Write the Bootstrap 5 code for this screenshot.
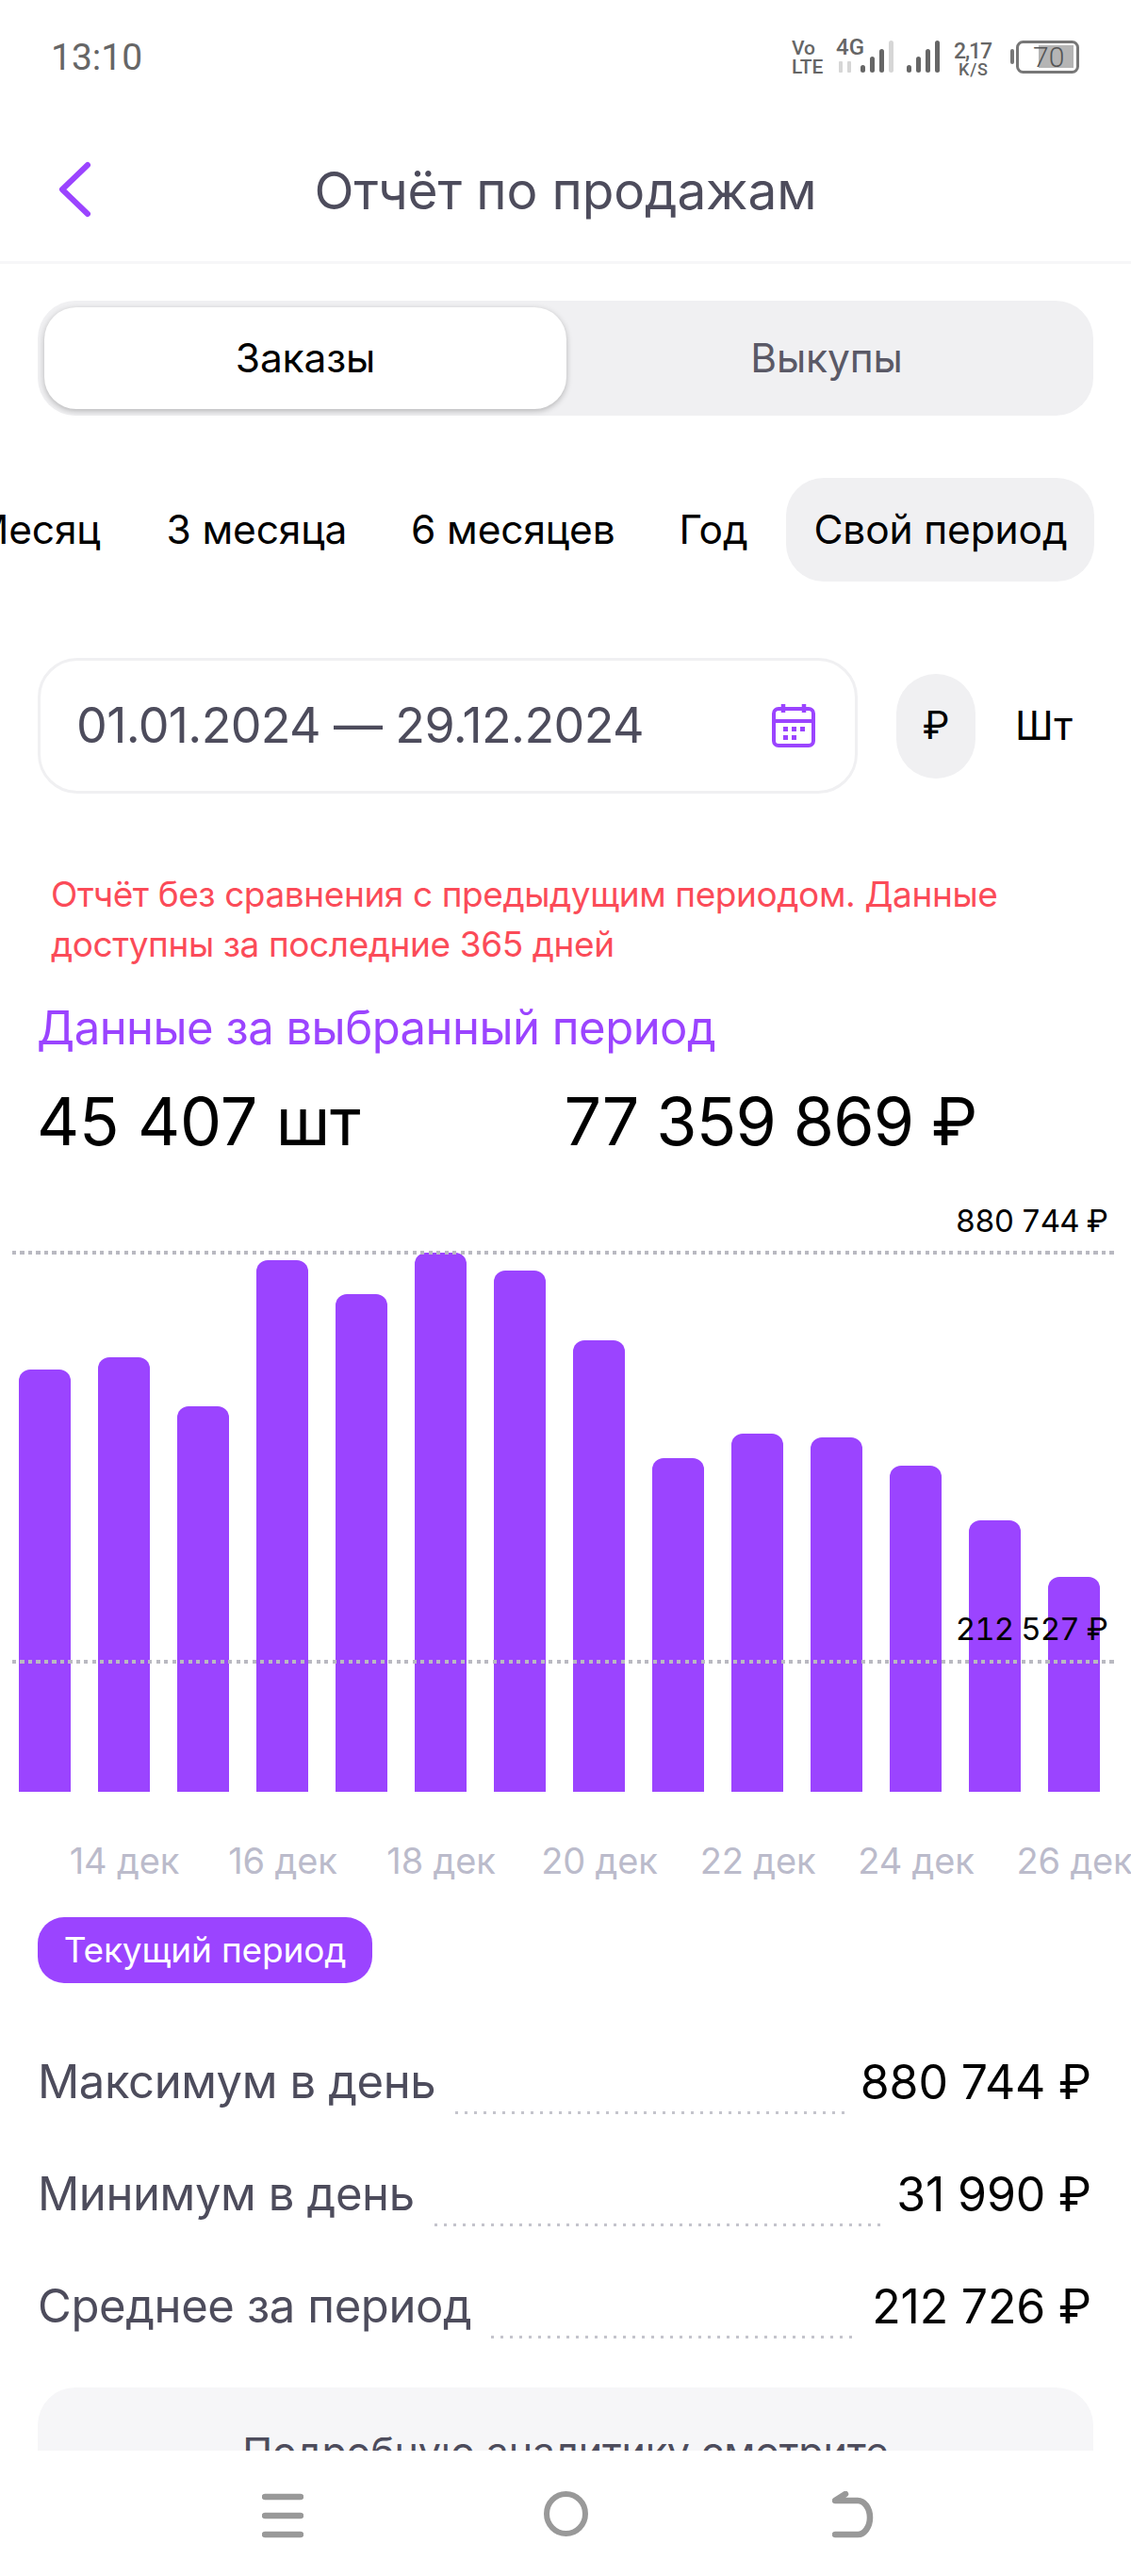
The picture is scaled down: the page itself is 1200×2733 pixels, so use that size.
<!DOCTYPE html>
<html lang="ru">
<head>
<meta charset="utf-8">
<title>Отчёт по продажам</title>
<link href="https://cdn.jsdelivr.net/npm/bootstrap@5.3.0/dist/css/bootstrap.min.css" rel="stylesheet">
<style>
html,body{margin:0;background:#fff}
body{width:1200px;height:2733px;overflow:hidden;font-family:Inter,"Liberation Sans",sans-serif;color:#000;letter-spacing:-.01em}
.app-shell{width:1200px;height:2733px;overflow:hidden}
.status-row{height:120px;padding:0 48px 0 54px;font-family:Roboto,"Liberation Sans",sans-serif;color:#666;letter-spacing:0}
.status-time{font-size:39px;line-height:1;padding-top:3px}
.status-row text{font-family:Roboto,"Liberation Sans",sans-serif}
.title-row{height:160px;border-bottom:3px solid #f6f6f8;position:relative}
.title-text{font-size:55px;line-height:1;color:#4d4c5c;margin:0;font-weight:400;padding-top:7px}
.back-btn{position:absolute;left:60px;top:50px;line-height:0}
.scroll-area{height:2320px;overflow:hidden}
.seg-wrap{margin:39px 40px 0;height:122px;background:#f0f0f2;border-radius:40px;padding:7px}
.seg-on,.seg-off{font-size:42.5px;height:108px}
.seg-on{background:#fff;border-radius:34px;box-shadow:0 2px 6px rgba(0,0,0,.25);width:554px}
.seg-off{color:#5a5966}
.tabs-row{margin-top:66px;height:110px;white-space:nowrap;overflow:hidden}
.tab-item{font-size:42.5px;line-height:110px;flex:none}
.tab-cut{margin-left:-29px;margin-right:70px}
.tab-gap{margin-right:68px}
.tab-on{background:#f0f0f2;border-radius:40px;width:327px;text-align:center;margin-left:41px}
.date-row{margin:81px 40px 0;height:144px}
.date-box{width:870px;height:144px;border:3px solid #f0f0f2;border-radius:42px;padding:0 38px;font-size:52px;color:#4d4c5c;letter-spacing:-.0125em}
.unit-on{width:84px;height:111px;border-radius:42px;background:#f0f0f2;font-size:41px;margin-left:41px}
.unit-off{font-size:42.5px;margin-left:42px}
.warn-text{margin:80px 54px 0;font-size:37px;line-height:53px;color:#fb4b58;letter-spacing:-.0112em}
.lead-head{margin:30px 39px 0;font-size:49px;line-height:66px;color:#9b44ff;font-weight:400;letter-spacing:-.0105em}
.totals{margin:24px 39px 0;font-size:70px;line-height:84px;font-weight:400}
.total-two{margin-left:216px;letter-spacing:-.012em}
.chart-box{position:relative;height:621px;margin-top:48px;padding-left:20px;gap:29px;align-items:flex-end}
.chart-bar{width:55px;background:#9b44ff;border-radius:12px 12px 0 0;flex:none}
.dots{position:absolute;left:13px;width:1170px;height:4px;background:repeating-linear-gradient(90deg,#b9b9c1 0 4px,transparent 4px 8.5px)}
.dots-hi{top:47px}
.dots-lo{top:481px}
.chart-note{position:absolute;right:25px;font-size:33px;line-height:40px;color:#000;font-variant-numeric:tabular-nums;letter-spacing:-.027em}
.note-hi{top:-5px}
.note-lo{top:428px}
.axis{margin-top:45px;padding-left:48px;height:56px;white-space:nowrap;overflow:hidden}
.axis-tick{flex:none;width:168px;font-size:38px;line-height:56px;color:#bbbbcb;text-align:center}
.period-pill{margin:32px 0 0 40px;height:70px;width:355px;border-radius:28px;background:#9b44ff;color:#fff;font-size:37px;line-height:70px;text-align:center}
.stat-list{margin:69px 42px 0 40px}
.stat-line{height:119px;font-size:50px;line-height:72px;align-items:flex-start}
.stat-name{color:#4d4c5c;flex:none;font-size:49px;letter-spacing:-.008em}
.stat-lead{flex:1 1 auto;height:70px;margin:0 16px 0 21px;background:repeating-linear-gradient(90deg,#c4c4cc 0 3px,transparent 3px 10px) bottom/100% 3px no-repeat}
.stat-val{flex:none}
.promo{margin:3px 40px 0;height:200px;background:#f6f6f8;border-radius:40px 40px 0 0;text-align:center;font-size:43px;line-height:50px;color:#4d4c5c;padding-top:43px}
.nav-bottom{height:133px;background:#fff;padding:43px 0 0 278px;gap:255px}
</style>
</head>
<body>
<div class="app-shell d-flex flex-column">
  <div class="status-row d-flex align-items-center justify-content-between">
    <div class="status-time">13:10</div>
    <svg width="312" height="120" viewBox="840 0 312 120" aria-hidden="true">
      <g fill="#666" font-weight="500">
        <text x="840" y="58" font-size="21">Vo</text>
        <text x="840" y="78" font-size="21">LTE</text>
        <text x="887" y="58" font-size="24">4G</text>
        <text x="1012" y="62" font-size="23" textLength="41">2,17</text>
        <text x="1017" y="80" font-size="18" textLength="31">K/S</text>
      </g>
      <g fill="#d6d6d6"><rect x="890" y="65" width="4" height="12" rx="1"/><rect x="899" y="65" width="4" height="12" rx="1"/></g>
      <g fill="#666">
        <rect x="913" y="69" width="5" height="8" rx="2.5"/><rect x="923" y="60" width="5" height="17" rx="2.5"/><rect x="933" y="52" width="5" height="25" rx="2.5"/>
        <rect x="962" y="69" width="5" height="8" rx="2.5"/><rect x="972" y="60" width="5" height="17" rx="2.5"/><rect x="982" y="52" width="5" height="25" rx="2.5"/><rect x="992" y="43" width="5" height="34" rx="2.5"/>
      </g>
      <rect x="943" y="43" width="5" height="34" rx="2.5" fill="#d6d6d6"/>
      <rect x="1072" y="52" width="4" height="16" rx="2" fill="#777"/>
      <rect x="1079.500" y="44.500" width="64" height="32" rx="6" fill="none" stroke="#777" stroke-width="3"/>
      <rect x="1102" y="48" width="37" height="24" fill="#b5b5b5"/>
      <text x="1096" y="71" font-size="30" fill="#555" font-weight="300">70</text>
    </svg>
  </div>
  <div class="title-row d-flex align-items-center justify-content-center">
    <a class="back-btn" href="#"><svg width="38" height="62" viewBox="0 0 38 62"><path d="M33 5 6 31l27 26" fill="none" stroke="#9b44ff" stroke-width="6" stroke-linecap="round" stroke-linejoin="round"/></svg></a>
    <h1 class="title-text">Отчёт по продажам</h1>
  </div>
  <div class="scroll-area">
    <div class="seg-wrap d-flex">
      <div class="seg-on d-flex align-items-center justify-content-center">Заказы</div>
      <div class="seg-off flex-fill d-flex align-items-center justify-content-center">Выкупы</div>
    </div>
    <div class="tabs-row d-flex">
      <div class="tab-item tab-cut">Месяц</div>
      <div class="tab-item tab-gap">3 месяца</div>
      <div class="tab-item tab-gap">6 месяцев</div>
      <div class="tab-item">Год</div>
      <div class="tab-item tab-on">Свой период</div>
    </div>
    <div class="date-row d-flex align-items-center">
      <div class="date-box d-flex align-items-center justify-content-between">
        <span>01.01.2024 — 29.12.2024</span>
        <svg class="me-1" width="46" height="46" viewBox="0 0 46 46" aria-hidden="true">
          <rect x="2" y="5" width="42" height="39" rx="5" fill="none" stroke="#9b44ff" stroke-width="4"/>
          <path d="M2 18h42" stroke="#9b44ff" stroke-width="4"/>
          <path d="M12 0v9M34 0v9" stroke="#9b44ff" stroke-width="4.500"/>
          <g fill="#9b44ff"><rect x="12" y="24" width="5" height="5"/><rect x="21" y="24" width="5" height="5"/><rect x="30" y="24" width="5" height="5"/><rect x="12" y="33" width="5" height="5"/><rect x="21" y="33" width="5" height="5"/></g>
        </svg>
      </div>
      <div class="unit-on d-flex align-items-center justify-content-center">₽</div>
      <div class="unit-off">Шт</div>
    </div>
    <p class="warn-text">Отчёт без сравнения с предыдущим периодом. Данные<br>доступны за последние 365 дней</p>
    <h2 class="lead-head">Данные за выбранный период</h2>
    <div class="totals d-flex"><span>45 407 шт</span><span class="total-two">77 359 869 ₽</span></div>
    <div class="chart-box d-flex">
      <div class="chart-bar" style="height:448px"></div>
      <div class="chart-bar" style="height:461px"></div>
      <div class="chart-bar" style="height:409px"></div>
      <div class="chart-bar" style="height:564px"></div>
      <div class="chart-bar" style="height:528px"></div>
      <div class="chart-bar" style="height:572px"></div>
      <div class="chart-bar" style="height:553px"></div>
      <div class="chart-bar" style="height:479px"></div>
      <div class="chart-bar" style="height:354px"></div>
      <div class="chart-bar" style="height:380px"></div>
      <div class="chart-bar" style="height:376px"></div>
      <div class="chart-bar" style="height:346px"></div>
      <div class="chart-bar" style="height:288px"></div>
      <div class="chart-bar" style="height:228px"></div>
      <div class="dots dots-hi"></div>
      <div class="dots dots-lo"></div>
      <div class="chart-note note-hi">880 744 ₽</div>
      <div class="chart-note note-lo">212 527 ₽</div>
    </div>
    <div class="axis d-flex">
      <span class="axis-tick">14 дек</span><span class="axis-tick">16 дек</span><span class="axis-tick">18 дек</span><span class="axis-tick">20 дек</span><span class="axis-tick">22 дек</span><span class="axis-tick">24 дек</span><span class="axis-tick">26 дек</span>
    </div>
    <div class="period-pill">Текущий период</div>
    <div class="stat-list">
      <div class="stat-line d-flex"><span class="stat-name">Максимум в день</span><span class="stat-lead"></span><span class="stat-val">880 744 ₽</span></div>
      <div class="stat-line d-flex"><span class="stat-name">Минимум в день</span><span class="stat-lead"></span><span class="stat-val">31 990 ₽</span></div>
      <div class="stat-line d-flex"><span class="stat-name">Среднее за период</span><span class="stat-lead"></span><span class="stat-val">212 726 ₽</span></div>
    </div>
    <div class="promo">Подробную аналитику смотрите</div>
  </div>
  <div class="nav-bottom d-flex align-items-start">
    <svg width="44" height="50" viewBox="0 0 44 50" aria-hidden="true"><path d="M3 6h38M3 26h38M3 46h38" stroke="#999" stroke-width="6.500" stroke-linecap="round"/></svg>
    <svg width="47" height="48" viewBox="0 0 47 48" aria-hidden="true"><ellipse cx="23.500" cy="24" rx="20.500" ry="21" fill="none" stroke="#999" stroke-width="6"/></svg>
    <svg width="44" height="50" viewBox="0 0 44 50" aria-hidden="true" class="ms-1"><path d="M3 46h24a13 18 0 0 0 0-36H3l11-7" fill="none" stroke="#999" stroke-width="6.500" stroke-linecap="round" stroke-linejoin="round"/></svg>
  </div>
</div>
</body>
</html>
